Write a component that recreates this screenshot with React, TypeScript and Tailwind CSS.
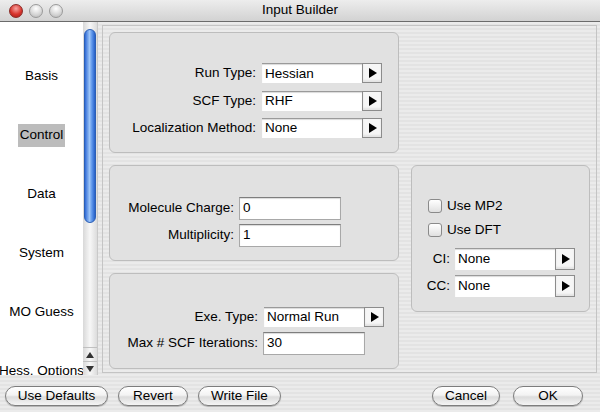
import React from 'react';

const stripes =
  'bg-[repeating-linear-gradient(0deg,#ebebeb_0px,#ebebeb_2px,#e3e3e3_2px,#e3e3e3_4px)]';

function Light({ color }: { color: 'red' | 'gray' }) {
  const cls =
    color === 'red'
      ? 'bg-[radial-gradient(circle_at_50%_30%,#f6a3a0_0%,#d8352e_55%,#a51c17_100%)] border-[#8a2a26]'
      : 'bg-[radial-gradient(circle_at_50%_30%,#ffffff_0%,#d8d8d8_55%,#b5b5b5_100%)] border-[#9a9a9a]';
  return <div className={`w-[14px] h-[14px] rounded-full border ${cls}`} />;
}

function ArrowButton() {
  return (
    <div className="w-[20px] self-stretch flex items-center justify-center bg-[#f6f6f6] border border-[#8c8c8c] shadow-[inset_0_-2px_2px_rgba(0,0,0,0.08)]">
      <span className="w-0 h-0 border-y-[5px] border-y-transparent border-l-[8px] border-l-black ml-[1px]" />
    </div>
  );
}

function Combo({ value, h = 'h-[20px]' }: { value: string; h?: string }) {
  return (
    <div className={`flex ${h}`}>
      <div className="w-[100px] bg-white flex items-center pl-[3px] border-t border-[#9a9a9a] shadow-[inset_0_1px_1px_rgba(0,0,0,0.15)]">
        {value}
      </div>
      <ArrowButton />
    </div>
  );
}

function Field({ value, w }: { value: string; w: string }) {
  return (
    <div
      className={`${w} h-[23px] bg-white flex items-center pl-[3px] border border-[#a8a8a8] border-t-[#7e7e7e] shadow-[inset_0_1px_1px_rgba(0,0,0,0.15)]`}
    >
      {value}
    </div>
  );
}

function Box({ className, children }: { className: string; children: React.ReactNode }) {
  return (
    <div className={`rounded-[6px] border border-[#bdbdbd] bg-[#e1e1e1] ${className}`}>{children}</div>
  );
}

function AquaButton({ label, w }: { label: string; w: string }) {
  return (
    <button
      className={`${w} h-[20px] rounded-full border border-[#7d7d7d] bg-[linear-gradient(180deg,#ffffff_0%,#f3f3f3_45%,#dcdcdc_55%,#f4f4f4_100%)] shadow-[0_1px_1px_rgba(0,0,0,0.25)] text-[13.5px] leading-none flex items-center justify-center`}
    >
      {label}
    </button>
  );
}

function Checkbox({ label }: { label: string }) {
  return (
    <div className="flex items-center gap-[5px] h-[14px]">
      <div className="w-[14px] h-[14px] rounded-[3px] border border-[#8a8a8a] bg-[linear-gradient(180deg,#ffffff,#e0e0e0)]" />
      <span>{label}</span>
    </div>
  );
}

const items = ['Basis', 'Control', 'Data', 'System', 'MO Guess', 'Hess. Options'];

export default function App() {
  return (
    <div
      className={`w-[600px] h-[412px] flex flex-col overflow-hidden text-[13.5px] text-black ${stripes}`}
      style={{ fontFamily: '"Liberation Sans", Arial, sans-serif' }}
    >
      {/* Title bar */}
      <div className="h-[22px] shrink-0 relative flex items-center justify-center bg-[linear-gradient(180deg,#ededed,#d2d2d2)] border-b border-[#6b6b6b]">
        <div className="absolute left-[9px] top-[4px] flex gap-[6px]">
          <Light color="red" />
          <Light color="gray" />
          <Light color="gray" />
        </div>
        <span>Input Builder</span>
      </div>

      {/* Body */}
      <div className="flex h-[353px]">
        {/* Side list */}
        <div className="w-[83px] bg-white overflow-hidden pt-[25px] flex flex-col">
          {items.map((it) => (
            <div key={it} className="h-[59px] shrink-0 flex items-center justify-center whitespace-nowrap">
              <span className={it === 'Control' ? 'bg-[#bcbcbc] px-[2px] py-[1px]' : ''}>{it}</span>
            </div>
          ))}
        </div>
        {/* Scroll bar */}
        <div className="w-[15px] flex flex-col bg-[linear-gradient(90deg,#d8d8d8,#f7f7f7_50%,#dcdcdc)] border-r border-[#c9c9c9]">
          <div className="flex-1 px-[1px] pt-[7px]">
            <div className="h-[194px] rounded-full border border-[#2b5fb5] bg-[linear-gradient(90deg,#2f6ad6,#9cc4f7_45%,#5b94ea_70%,#2760c8)]" />
          </div>
          <div className="h-[14px] flex items-center justify-center border-t border-[#c0c0c0]">
            <span className="w-0 h-0 border-x-[4px] border-x-transparent border-b-[6px] border-b-[#333]" />
          </div>
          <div className="h-[14px] flex items-center justify-center border-t border-[#c0c0c0]">
            <span className="w-0 h-0 border-x-[4px] border-x-transparent border-t-[6px] border-t-[#333]" />
          </div>
        </div>

        {/* Main frame */}
        <div className="ml-[4px] mt-[3px] mr-[3px] mb-[2px] flex-1 border border-[#c4c4c4] pl-[6px] pt-[6px] flex gap-[12px]">
          <div className="w-[290px] flex flex-col gap-[12px]">
            <Box className="h-[121px] flex flex-col justify-end pb-[14px] gap-[7px]">
              {[
                ['Run Type:', 'Hessian'],
                ['SCF Type:', 'RHF'],
                ['Localization Method:', 'None'],
              ].map(([l, v]) => (
                <div key={l} className="flex items-center">
                  <span className="w-[152px] text-right pr-[6px]">{l}</span>
                  <Combo value={v} />
                </div>
              ))}
            </Box>
            <Box className="h-[96px] flex flex-col justify-end pb-[13px] gap-[4px]">
              {[
                ['Molecule Charge:', '0'],
                ['Multiplicity:', '1'],
              ].map(([l, v]) => (
                <div key={l} className="flex items-center">
                  <span className="w-[129px] text-right pr-[5px]">{l}</span>
                  <Field value={v} w="w-[102px]" />
                </div>
              ))}
            </Box>
            <Box className="h-[96px] flex flex-col justify-end pb-[13px] gap-[5px]">
              <div className="flex items-center">
                <span className="w-[154px] text-right pr-[6px]">Exe. Type:</span>
                <Combo value="Normal Run" />
              </div>
              <div className="flex items-center">
                <span className="w-[153px] text-right pr-[5px]">Max # SCF Iterations:</span>
                <Field value="30" w="w-[102px]" />
              </div>
            </Box>
          </div>

          <Box className="mt-[133px] w-[179px] h-[147px] pt-[33px] pl-[16px] flex flex-col">
            <div className="flex flex-col gap-[10px]">
              <Checkbox label="Use MP2" />
              <Checkbox label="Use DFT" />
            </div>
            <div className="mt-[11px] flex flex-col gap-[5px] -ml-[16px]">
              {[
                ['CI:', 'None'],
                ['CC:', 'None'],
              ].map(([l, v]) => (
                <div key={l} className="flex items-center">
                  <span className="w-[43px] text-right pr-[5px]">{l}</span>
                  <Combo value={v} h="h-[22px]" />
                </div>
              ))}
            </div>
          </Box>
        </div>
      </div>

      {/* Button row */}
      <div className="flex items-center pt-[11px] px-[5px]">
        <div className="flex gap-[10px]">
          <AquaButton label="Use Defaults" w="w-[103px]" />
          <AquaButton label="Revert" w="w-[70px]" />
          <AquaButton label="Write File" w="w-[83px]" />
        </div>
        <div className="ml-auto mr-[12px] flex gap-[13px]">
          <AquaButton label="Cancel" w="w-[68px]" />
          <AquaButton label="OK" w="w-[70px]" />
        </div>
      </div>
    </div>
  );
}
